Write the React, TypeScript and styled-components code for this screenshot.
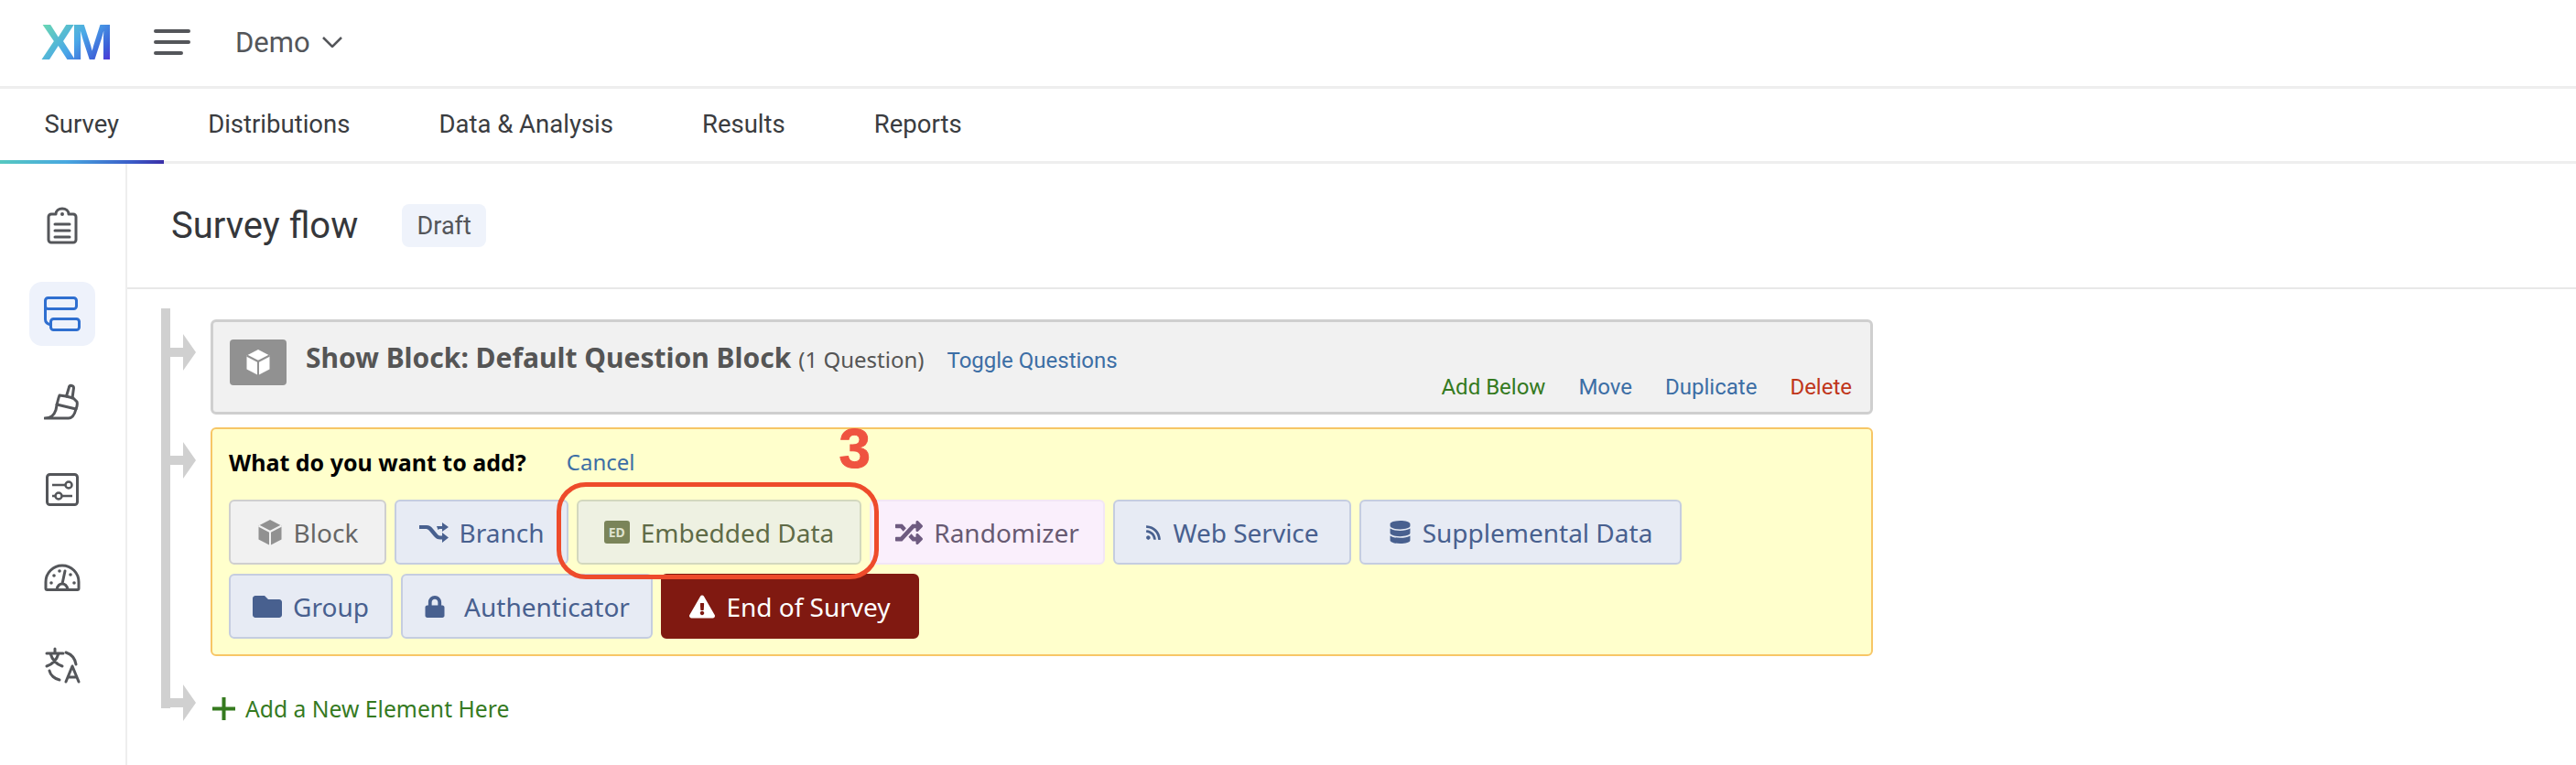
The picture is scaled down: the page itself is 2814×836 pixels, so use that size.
import React from "react"
import styled, { createGlobalStyle } from "styled-components"
import { FaDatabase, FaExclamationTriangle, FaFolder, FaLock, FaRandom, FaRss } from "react-icons/fa"

const GlobalStyle = createGlobalStyle`
  html, body { margin: 0; padding: 0; background: #fff; }
  body { font-family: "Noto Sans", sans-serif; color: #3a3c40; }
  * { box-sizing: border-box; }
`

const INK = "#54565a"
const CHROME_FONT = `Roboto, sans-serif`

const ClipboardIcon = () => (
  <svg width="40" height="42" viewBox="0 0 40 42" fill="none" stroke={INK} strokeWidth="3" strokeLinejoin="round" strokeLinecap="round">
    <path d="M13 8H8a3 3 0 0 0-3 3v25a3 3 0 0 0 3 3h24a3 3 0 0 0 3-3V11a3 3 0 0 0-3-3h-5c0-3.500-3-6-7-6s-7 2.500-7 6z" />
    <path d="M12 19h16M12 26h16M12 33h16" strokeWidth="3" />
    <circle cx="20" cy="8" r="1" strokeWidth="2" />
  </svg>
)

const FlowIcon = () => (
  <svg width="40" height="40" viewBox="0 0 40 40" fill="none" stroke="#2f6fd0" strokeWidth="3">
    <rect x="1.500" y="2.500" width="34" height="12" rx="3" />
    <rect x="7.500" y="25.500" width="31" height="12" rx="3" />
    <path d="M1.500 12v14c0 3 2 5 6 6" />
  </svg>
)

const BrushIcon = () => (
  <svg width="40" height="40" viewBox="0 0 40 40" fill="none" stroke={INK} strokeWidth="3" strokeLinejoin="round" strokeLinecap="round">
    <path d="M24.500 14l3-10c.6-2.500 5-2 5 1l-1.500 11" />
    <path d="M17 13l7 1 8 2 4 4c1 3 0 5-1 8-1 4-3 10-8 10H1c7 0 10-3 12-9 1-5 2-11 4-16z" />
    <path d="M14 23l21 5" />
  </svg>
)

const SlidersIcon = () => (
  <svg width="40" height="40" viewBox="0 0 40 40" fill="none" stroke={INK} strokeWidth="3">
    <rect x="3.500" y="3.500" width="33" height="33" rx="3" />
    <path d="M9 15h22M9 27h22" strokeWidth="2.500" />
    <circle cx="27" cy="15" r="3.500" fill="#fff" strokeWidth="2.500" />
    <circle cx="16" cy="27" r="3.500" fill="#fff" strokeWidth="2.500" />
  </svg>
)

const GaugeIcon = () => (
  <svg width="40" height="40" viewBox="0 0 40 40" fill="none" stroke={INK} strokeWidth="3" strokeLinejoin="round" strokeLinecap="round">
    <path d="M2 32v-7a18 18 0 0 1 36 0v7a1.500 1.500 0 0 1-1.500 1.500h-33A1.500 1.500 0 0 1 2 32z" />
    <path d="M14 33c1-4 3-6 6-6s5 2 6 6M20 27l3-14" />
    <g fill={INK} stroke="none">
      <circle cx="8" cy="26" r="1.800" />
      <circle cx="11" cy="18" r="1.800" />
      <circle cx="17" cy="13" r="1.800" />
      <circle cx="29" cy="17" r="1.800" />
      <circle cx="33" cy="26" r="1.800" />
    </g>
  </svg>
)

const TranslateIcon = () => (
  <svg width="40" height="40" viewBox="0 0 40 40" fill="none" stroke={INK} strokeWidth="3" strokeLinecap="round" strokeLinejoin="round">
    <path d="M12 2v4M3 7h18M7 7c2 7 7 12 13 14M16 7c-2 7-7 12-13 14" />
    <path d="M24 38l7-17 7 17M26.500 33h9" />
    <path d="M24 6c6 2 10 7 11 13M6 26c1 5 6 9 11 10" />
  </svg>
)

const CubeIcon = ({ size, color, seam }: { size: number; color: string; seam: string }) => (
  <svg width={size} height={size} viewBox="0 0 28 28">
    <path d="M14 0l12.500 6.500v15L14 28 1.500 21.500v-15z" fill={color} />
    <path d="M1.500 6.500L14 13l12.500-6.500M14 13v15" fill="none" stroke={seam} strokeWidth="2" />
  </svg>
)

const BranchIcon = () => (
  <svg width="32" height="24" viewBox="0 0 32 24" fill="#48608f">
    <path d="M0 4h8c3 0 5 1.500 7 4l5 6c1 1 2 1.500 4 1.500h1V12l7 5.500-7 5.500v-3.500h-2c-3 0-5-1-7-3.500l-5-6C9.500 8.500 8.500 8 7 8H0z" />
    <path d="M19 5h6V1l7 5-7 5V8h-2c-1 0-2 .5-2.500 1z" />
  </svg>
)

const EmbeddedIcon = () => (
  <EdBadge>ED</EdBadge>
)

const rows = [
  [
    { label: "Block", tone: "gray", w: 172, icon: <CubeIcon size={28} color="#919191" seam="#f1f1f1" /> },
    { label: "Branch", tone: "blue", w: 190, icon: <BranchIcon /> },
    { label: "Embedded Data", tone: "green", w: 311, icon: <EmbeddedIcon />, marked: true },
    { label: "Randomizer", tone: "purple", w: 257, icon: <FaRandom size={30} color="#6e5b80" /> },
    { label: "Web Service", tone: "blue", w: 260, icon: <FaRss size={18} color="#48608f" /> },
    { label: "Supplemental Data", tone: "blue", w: 352, icon: <FaDatabase size={25} color="#48608f" /> },
  ],
  [
    { label: "Group", tone: "blue", w: 179, icon: <FaFolder size={32} color="#48608f" /> },
    { label: "Authenticator", tone: "blue", w: 275, gap: 20, icon: <FaLock size={24} color="#48608f" /> },
    { label: "End of Survey", tone: "red", w: 282, icon: <FaExclamationTriangle size={28} color="#fff" /> },
  ],
]

const tones: Record<string, { bg: string; border: string; fg: string }> = {
  gray: { bg: "#f1f1f1", border: "#cfcfcf", fg: "#666666" },
  blue: { bg: "#e7ebf4", border: "#c5cde0", fg: "#48608f" },
  green: { bg: "#eef1e2", border: "#d3d8be", fg: "#5f6b47" },
  purple: { bg: "#faeffc", border: "#f2e6f5", fg: "#675a72" },
  red: { bg: "#801911", border: "#801911", fg: "#ffffff" },
}

const sideIcons = [
  { key: "survey", icon: <ClipboardIcon /> },
  { key: "flow", icon: <FlowIcon />, active: true },
  { key: "look", icon: <BrushIcon /> },
  { key: "options", icon: <SlidersIcon /> },
  { key: "gauge", icon: <GaugeIcon /> },
  { key: "translate", icon: <TranslateIcon /> },
]

const App: React.FC = () => {
  return (
    <Page>
      <GlobalStyle />
      <TopBar>
        <Logo>XM</Logo>
        <svg width="40" height="28" viewBox="0 0 40 28" fill={INK}>
          <rect x="0" y="0" width="40" height="4" rx="2" />
          <rect x="0" y="12" width="40" height="4" rx="2" />
          <rect x="0" y="24" width="32" height="4" rx="2" />
        </svg>
        <Project>
          Demo
          <svg width="22" height="12" viewBox="0 0 22 12" fill="none" stroke={INK} strokeWidth="2.500">
            <path d="M1 1l10 10L21 1" />
          </svg>
        </Project>
      </TopBar>
      <Tabs>
        {["Survey", "Distributions", "Data & Analysis", "Results", "Reports"].map((t, i) => (
          <Tab key={t} $active={i === 0}>
            {t}
          </Tab>
        ))}
      </Tabs>
      <Body>
        <Sidebar>
          {sideIcons.map((s) => (
            <SideItem key={s.key} $active={s.active}>
              {s.icon}
            </SideItem>
          ))}
        </Sidebar>
        <Main>
          <Header>
            <Title>Survey flow</Title>
            <Badge>Draft</Badge>
          </Header>
          <Flow>
            <svg width="54" height="452" viewBox="0 0 54 452" fill="#d0d0d0">
              <rect x="0" y="0" width="10" height="437" />
              <path d="M10 43h14V28l14 20-14 20V53H10z" />
              <path d="M10 161h14v-15l14 20-14 20v-15H10z" />
              <path d="M0 426h24v-15l14 20-14 20v-15H0z" />
            </svg>
            <FlowColumn>
              <BlockRow>
                <BlockIcon>
                  <CubeIcon size={28} color="#ffffff" seam="#919191" />
                </BlockIcon>
                <BlockTitle>
                  <strong>Show Block: Default Question Block</strong>
                  <Count>(1 Question)</Count>
                  <Toggle>Toggle Questions</Toggle>
                </BlockTitle>
                <Actions>
                  <Action $color="#357a1f">Add Below</Action>
                  <Action $color="#3c6ea5">Move</Action>
                  <Action $color="#3c6ea5">Duplicate</Action>
                  <Action $color="#c0361a">Delete</Action>
                </Actions>
              </BlockRow>
              <AddPanel>
                <Prompt>
                  <strong>What do you want to add?</strong>
                  <Cancel>Cancel</Cancel>
                </Prompt>
                {rows.map((row, i) => (
                  <ButtonRow key={i}>
                    {row.map((b) => (
                      <ElementButton key={b.label} $tone={b.tone} $w={b.w} $gap={"gap" in b ? b.gap : undefined}>
                        {b.icon}
                        {b.label}
                        {"marked" in b && (
                          <>
                            <Ring />
                            <Step>3</Step>
                          </>
                        )}
                      </ElementButton>
                    ))}
                  </ButtonRow>
                ))}
              </AddPanel>
              <AddRow>
                <svg width="25" height="25" viewBox="0 0 25 25" fill="#357a1f">
                  <path d="M10.500 0h4v10.500H25v4H14.500V25h-4V14.500H0v-4h10.500z" />
                </svg>
                Add a New Element Here
              </AddRow>
            </FlowColumn>
          </Flow>
        </Main>
      </Body>
    </Page>
  )
}

export default App

const Page = styled.div`
  width: 2814px;
  height: 836px;
  overflow: hidden;
  display: flex;
  flex-direction: column;
`
const TopBar = styled.header`
  height: 97px;
  flex: none;
  display: flex;
  align-items: center;
  padding: 0 0 2px 45px;
  border-bottom: 3px solid #eeeeee;
`
const Logo = styled.span`
  width: 75px;
  margin-right: 48px;
  font-family: "Liberation Sans", sans-serif;
  font-weight: 700;
  font-size: 56px;
  line-height: 56px;
  letter-spacing: -5px;
  background: linear-gradient(135deg, #6fe0a8 0%, #4aa8e8 50%, #3d5fd8 80%, #5a1fd8 100%);
  -webkit-background-clip: text;
  background-clip: text;
  color: transparent;
`
const Project = styled.div`
  display: flex;
  align-items: center;
  gap: 13px;
  margin-left: 49px;
  font-family: ${CHROME_FONT};
  font-size: 31px;
  color: ${INK};
`
const Tabs = styled.nav`
  height: 82px;
  flex: none;
  display: flex;
  border-bottom: 3px solid #eeeeee;
`
const Tab = styled.a<{ $active?: boolean }>`
  position: relative;
  display: flex;
  align-items: center;
  padding: 0 48.500px 3px;
  font-family: ${CHROME_FONT};
  font-size: 27.500px;
  color: #3a3c40;

  ${(p) =>
    p.$active &&
    `
    &::after {
      content: "";
      position: absolute;
      left: 0;
      right: 0;
      bottom: -3px;
      height: 4px;
      background: linear-gradient(90deg, #55c8c0 0%, #48a8e0 40%, #3a5cc8 80%, #3a2fa8 100%);
    }
  `}
`
const Body = styled.div`
  flex: 1;
  display: flex;
  min-height: 0;
`
const Sidebar = styled.aside`
  width: 139px;
  flex: none;
  display: flex;
  flex-direction: column;
  align-items: center;
  gap: 26px;
  padding-top: 33px;
  padding-right: 2px;
  border-right: 2px solid #eeeeee;
`
const SideItem = styled.div<{ $active?: boolean }>`
  width: 72px;
  height: 70px;
  display: flex;
  align-items: center;
  justify-content: center;
  border-radius: 14px;
  background: ${(p) => (p.$active ? "#eef2fb" : "transparent")};
`
const Main = styled.main`
  flex: 1;
  min-width: 0;
`
const Header = styled.div`
  height: 137px;
  display: flex;
  align-items: center;
  padding-left: 48px;
  border-bottom: 2px solid #e8e8e8;
`
const Title = styled.h1`
  margin: 0 48px 0 0;
  font-family: ${CHROME_FONT};
  font-size: 40px;
  font-weight: 400;
  color: #35373b;
`
const Badge = styled.span`
  width: 92px;
  height: 47px;
  display: flex;
  align-items: center;
  justify-content: center;
  border-radius: 8px;
  background: #eff3fb;
  font-family: ${CHROME_FONT};
  font-size: 27px;
  color: ${INK};
`
const Flow = styled.div`
  display: flex;
  align-items: flex-start;
  padding: 21px 0 0 37px;
`
const FlowColumn = styled.div`
  width: 1816px;
  margin-top: 12px;
  display: flex;
  flex-direction: column;
`
const BlockRow = styled.div`
  height: 104px;
  display: flex;
  align-items: flex-start;
  padding: 19px 20px 12px 18px;
  border: 3px solid #cfcfcf;
  border-radius: 6px;
  background: #f1f1f1;
`
const BlockIcon = styled.div`
  width: 62px;
  height: 50px;
  flex: none;
  display: flex;
  align-items: center;
  justify-content: center;
  border-radius: 4px;
  background: #919191;
`
const BlockTitle = styled.div`
  margin-left: 21px;
  font-size: 30px;
  line-height: 40px;
  color: #555555;
  white-space: nowrap;
`
const Count = styled.span`
  margin-left: 8px;
  font-size: 24px;
`
const Toggle = styled.a`
  margin-left: 25px;
  font-family: ${CHROME_FONT};
  font-size: 24px;
  color: #3c6ea5;
`
const Actions = styled.div`
  margin-left: auto;
  align-self: flex-end;
  display: flex;
  gap: 36px;
  font-family: ${CHROME_FONT};
`
const Action = styled.a<{ $color: string }>`
  font-size: 24px;
  line-height: 30px;
  color: ${(p) => p.$color};
`
const AddPanel = styled.section`
  height: 250px;
  margin-top: 14px;
  padding: 10px 18px 0;
  border: 2.500px solid #f7c666;
  border-radius: 6px;
  background: #ffffcc;
`
const Prompt = styled.div`
  height: 51px;
  margin-bottom: 16px;
  display: flex;
  align-items: center;
  font-size: 25px;
  color: #000;
`
const Cancel = styled.a`
  margin-left: 44px;
  font-size: 24px;
  color: #3c6ea5;
`
const ButtonRow = styled.div`
  display: flex;
  gap: 9px;
  margin-bottom: 10px;
`
const ElementButton = styled.button<{ $tone: string; $w: number; $gap?: number }>`
  position: relative;
  width: ${(p) => p.$w}px;
  height: 71px;
  display: flex;
  align-items: center;
  justify-content: center;
  gap: ${(p) => p.$gap ?? 12}px;
  padding: 0;
  border: 2.500px solid ${(p) => tones[p.$tone].border};
  border-radius: 6px;
  background: ${(p) => tones[p.$tone].bg};
  font-family: inherit;
  font-size: 28px;
  color: ${(p) => tones[p.$tone].fg};
`
const EdBadge = styled.span`
  width: 28px;
  height: 25px;
  display: flex;
  align-items: center;
  justify-content: center;
  border-radius: 3px;
  background: #7a8459;
  color: #dfe3cf;
  font-size: 14px;
  font-weight: 700;
`
const Ring = styled.span`
  position: absolute;
  z-index: 2;
  top: -21px;
  right: -21px;
  bottom: -18px;
  left: -24px;
  border: 5px solid #ee4b2b;
  border-radius: 32px;
`
const Step = styled.span`
  position: absolute;
  z-index: 2;
  top: -100px;
  right: -12px;
  font-family: "Liberation Sans", sans-serif;
  font-size: 62px;
  line-height: 84px;
  font-weight: 700;
  -webkit-text-stroke: 1px #ef5340;
  color: #ef5340;
`
const AddRow = styled.div`
  margin: 41px 0 0 2px;
  display: flex;
  align-items: center;
  gap: 11px;
  font-size: 24.700px;
  color: #357a1f;
`
